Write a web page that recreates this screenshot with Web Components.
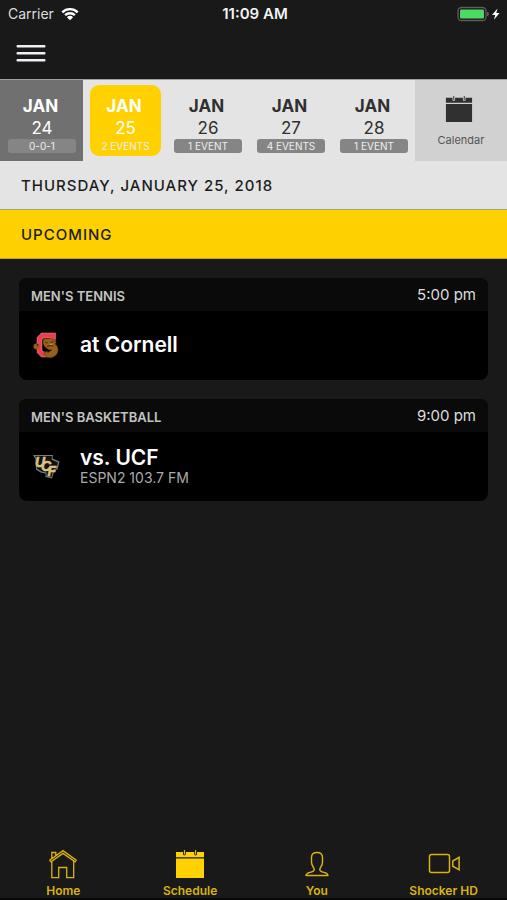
<!DOCTYPE html>
<html lang="en">
<head>
<meta charset="utf-8">
<meta name="viewport" content="width=device-width, initial-scale=1">
<title>Schedule</title>
<style>
  html, body { margin: 0; }
  body { background: #191919; font-family: Inter, "Liberation Sans", sans-serif; }
</style>
</head>
<body>
<schedule-app></schedule-app>
<script>
const icons = {
  wifi: `<svg width="18" height="14" viewBox="0 0 18 14" fill="none" stroke="#fff" stroke-width="2.4"><path d="M1.3 5.3a11 11 0 0 1 15.4 0M4.1 8.2a7 7 0 0 1 9.8 0"/><path d="M9 13.2 5.9 10.2a4.5 4.5 0 0 1 6.2 0Z" fill="#fff" stroke="none"/></svg>`,
  battery: `<svg width="45" height="16" viewBox="0 0 45 16"><rect x="1" y="1.5" width="28" height="13" rx="3.5" fill="none" stroke="#5c5c5c" stroke-width="1.3"/><rect x="3" y="3.5" width="24" height="9" rx="1.2" fill="#4cd964"/><path d="M30.5 6q2 2 0 4Z" fill="#5c5c5c" stroke="#5c5c5c"/><path d="M40.5 2.5 35 9h3.2l-1.2 4.7L42.5 7h-3.2Z" fill="#fff"/></svg>`,
  menu: `<svg width="30" height="20" viewBox="0 0 30 20" fill="#eeeef4"><rect x="0.5" y="1" width="29" height="2.6" rx="1"/><rect x="0.5" y="8" width="29" height="2.6" rx="1"/><rect x="0.5" y="15" width="29" height="2.6" rx="1"/></svg>`,
  calendar: `<svg width="30" height="30" viewBox="0 0 30 30" fill="currentColor"><path d="M1 3h7v2a1.400 1.400 0 0 0 2.800 0V3h8.400v2a1.400 1.400 0 0 0 2.800 0V3h7v5.300H1ZM1 9.600h28V29H1Z"/><path d="M8.900 1h1v4.500h-1ZM20.100 1h1v4.500h-1Z"/></svg>`,
  home: `<svg width="30" height="30" viewBox="0 0 30 30" fill="none" stroke="currentColor" stroke-width="1.3"><path d="M3 12.800 1.800 11.100 15 1.600l13.200 9.500-1.100 1.700L15 4.400ZM3.800 9.200V3.500h4v3M3.800 12.600V28.600h6.900V18.500h8v10.100h7V12.200"/></svg>`,
  you: `<svg width="30" height="30" viewBox="0 0 30 30" fill="none" stroke="currentColor" stroke-width="1.4" stroke-linejoin="round"><path d="M4 26.500c.2-2 1.800-2.600 4-3.100 3-.7 4.200-1.400 4.200-3 0-1.700-2.700-3.700-2.700-7.500V8.500c0-3.200 2.100-5 5.500-5s5.500 1.800 5.500 5v4.400c0 3.800-2.700 5.800-2.700 7.500 0 1.600 1.200 2.300 4.200 3 2.200.5 3.800 1.100 4 3.100Z"/></svg>`,
  video: `<svg width="34" height="30" viewBox="0 0 34 30" fill="none" stroke="currentColor" stroke-width="1.5"><rect x="2.500" y="5.500" width="20" height="18" rx="2"/><path d="M25.800 12v5.200l6.300 3.600V8.400Z"/></svg>`,
  cornell: `<svg width="28" height="28" viewBox="0 0 28 28" role="img" aria-label="Cornell"><path d="M21 9V4.500H10.500L7.500 7.500v13l3 3H16" fill="none" stroke="#f08a8e" stroke-width="5.400"/><path d="M21 9V4.500H10.500L7.500 7.500v13l3 3H16" fill="none" stroke="#e8404f" stroke-width="4.400"/><circle cx="4.500" cy="15.500" r="3" fill="#9a5a18"/><circle cx="5.500" cy="14" r="1" fill="#4d2b0b"/><path d="M11 9.500q1.500-3 4-1.500 4-1.500 6.500 1l2-.5.5 3-1 1.500q3.500 2.500 3 6.500-.7 5.500-6.500 7-4.500 1-7-2.500l-.5-3 4 .5 4-2.500-3.500-.5-3.500-2.500q-2.500-2.500-2-6Z" fill="#99601c" stroke="#5d370e" stroke-width=".6"/><path d="m13 11 2.500 1M18.500 11.500l3-1M15 15.500l3-1 3 .5" fill="none" stroke="#3b230b" stroke-width="1"/><path d="m17.500 13.500 3-.5" stroke="#a8a8a0" stroke-width="1.200"/></svg>`,
  ucf: `<svg width="28" height="28" viewBox="0 0 28 28" role="img" aria-label="UCF"><path d="M1 3h20l-.5 3.500 7 3-2 8-3 .5L20 26.500l-6.500-1.500v-3.500l-5-1L4 17.500 3.500 7Z" fill="#777b80"/><path d="M3 4h17l-.5 3.500 6.500 3-1.500 6-3 .5L19.500 25l-5-1v-3.500l-5-1L5 16.500 4.500 6.500Z" fill="#111"/><g fill="#d8bd79" stroke="#e2cc93" stroke-width=".5" font-family="Liberation Sans, sans-serif" font-size="14" font-weight="700" font-style="italic"><text x="3 9 15.500" y="15 19 23.500">UCF</text></g></svg>`
};

function define(name, html, setup) {
  const template = document.createElement('template');
  template.innerHTML = `<style>*,*::before{box-sizing:border-box} svg{display:block;flex:none}</style>` + html;
  customElements.define(name, class extends HTMLElement {
    connectedCallback() {
      if (this.shadowRoot) return;
      const root = this.attachShadow({ mode: 'open' });
      root.append(template.content.cloneNode(true));
      if (setup) setup(this, root);
    }
  });
}

define('status-bar', `<style>
  :host{display:grid;grid-template-columns:1fr auto 1fr;align-items:center;height:28px;padding:0 5px 0 8px;color:#fff;font-size:14px;line-height:20px}
  .carrier{display:flex;align-items:center;gap:7px;color:#ddd}
  .time{font-size:15px;font-weight:600;color:#f2f2f2}
  .power{display:flex;justify-content:flex-end}
</style>
<div class="carrier"><span>Carrier</span>${icons.wifi}</div><div class="time">11:09 AM</div><div class="power">${icons.battery}</div>`);

define('nav-bar', `<style>
  :host{display:flex;align-items:center;height:51px;padding:0 16px}
  button{border:0;padding:0;background:none}
</style><button aria-label="Menu">${icons.menu}</button>`);

define('day-tile', `<style>
  :host{display:block;color:#303030}
  button{display:flex;flex-direction:column;width:100%;height:100%;border:0;margin:0;padding:15px 7px 0 8px;background:none;font:inherit;color:inherit;text-align:center}
  .month{padding-right:3px;font-size:17px;line-height:22px;font-weight:700}
  .day{padding-top:1px;font-size:17px;line-height:20px}
  .note{height:14px;margin-top:1px;border-radius:3px;background:#858585;color:#eee;font-size:10px;line-height:14px;white-space:nowrap}
  :host([past]){background:#707070;color:#fff}
  :host([selected]){padding:5px 5px 5px 7px;color:#fff}
  :host([selected]) button{padding:10px 0 0;border-radius:9px;background:#ffd100}
  :host([selected]) .note{background:none}
</style><button><span class="month"></span><span class="day"></span><span class="note"><slot></slot></span></button>`,
(host, root) => {
  root.querySelector('.month').textContent = host.getAttribute('month');
  root.querySelector('.day').textContent = host.getAttribute('day');
});

define('calendar-button', `<style>
  :host{display:block;background:#d1d1d1;color:#303030}
  button{display:flex;flex-direction:column;align-items:center;width:100%;height:100%;border:0;padding:15px 0 0;background:none;font:inherit;color:inherit;font-size:11px;line-height:16px}
  svg{width:28px;height:28px;margin:0 5px 9px 0}
  span{color:#555}
</style><button>${icons.calendar}<span><slot></slot></span></button>`);

define('date-strip', `<style>
  :host{display:grid;box-sizing:border-box;grid-template-columns:repeat(5,minmax(0,83fr)) minmax(0,92fr);height:82px;background:#e4e4e4;border-top:1px solid #a0a0a0}
  ::slotted(*){box-sizing:border-box}
</style><slot></slot>`);

define('section-bar', `<style>
  :host{display:block;padding:1px 21px 0;background:#e4e4e4;color:#1c1c1c;font-size:15px;font-weight:500;line-height:47px;letter-spacing:1px;border-bottom:1px solid #aaa285}
  :host([accent]){background:#ffd100;border-bottom-color:#c5a511}
  h2{margin:0;font:inherit}
</style><h2><slot></slot></h2>`);

define('event-card', `<style>
  :host{display:block;overflow:hidden;border-radius:8px;background:#000;color:#fff}
  header{display:flex;justify-content:space-between;align-items:center;height:33px;padding:0 12px;background:#0a0a0a}
  h3{margin:0;padding-top:2px;font-size:13px;line-height:16px;font-weight:600;color:#c4c4c4}
  time{font-size:15px;line-height:20px;color:#dedede}
  .body{display:flex;align-items:center;gap:20px;height:69px;padding:0 13px 2px}
  .logo{width:28px}
  strong{display:block;font-size:21px;line-height:24px;font-weight:600}
</style><header><h3></h3><time></time></header><div class="body"><div class="logo"></div><div><strong></strong><slot name="info"></slot></div></div>`,
(host, root) => {
  root.querySelector('h3').textContent = host.getAttribute('sport');
  root.querySelector('time').textContent = host.getAttribute('time');
  root.querySelector('strong').textContent = host.getAttribute('opponent');
  root.querySelector('.logo').innerHTML = icons[host.getAttribute('logo')];
});

define('tab-item', `<style>
  :host{display:block;min-width:0}
  a{display:flex;flex-direction:column;align-items:center;gap:5px;color:#d9b410;text-decoration:none;font-size:12px;line-height:14px;font-weight:600;white-space:nowrap}
  :host([active]) svg{color:#ffd100}
</style><a href="#"><span class="icon"></span><span><slot></slot></span></a>`,
(host, root) => { root.querySelector('.icon').innerHTML = icons[host.getAttribute('icon')]; });

define('tab-bar', `<style>
  :host{display:grid;grid-template-columns:repeat(4,minmax(0,1fr))}
</style><slot></slot>`);

define('schedule-app', `<style>
  :host{display:flex;flex-direction:column;min-height:100vh;background:#191919}
  main{flex:1}
  .events{display:grid;gap:19px;padding:20px 19px 19px}
  .info{font-size:14px;line-height:16px;color:#aaa}
  footer{border-bottom:2px solid #080808}
  .events{padding-top:19px}
</style>
<status-bar></status-bar>
<nav-bar></nav-bar>
<main>
  <date-strip>
    <day-tile past month="JAN" day="24">0-0-1</day-tile>
    <day-tile selected month="JAN" day="25">2 EVENTS</day-tile>
    <day-tile month="JAN" day="26">1 EVENT</day-tile>
    <day-tile month="JAN" day="27">4 EVENTS</day-tile>
    <day-tile month="JAN" day="28">1 EVENT</day-tile>
    <calendar-button>Calendar</calendar-button>
  </date-strip>
  <section-bar>THURSDAY, JANUARY 25, 2018</section-bar>
  <section-bar accent>UPCOMING</section-bar>
  <div class="events">
    <event-card sport="MEN'S TENNIS" time="5:00 pm" opponent="at Cornell" logo="cornell"></event-card>
    <event-card sport="MEN'S BASKETBALL" time="9:00 pm" opponent="vs. UCF" logo="ucf"><div class="info" slot="info">ESPN2 103.7 FM</div></event-card>
  </div>
</main>
<footer>
  <tab-bar>
    <tab-item icon="home">Home</tab-item>
    <tab-item icon="calendar" active>Schedule</tab-item>
    <tab-item icon="you">You</tab-item>
    <tab-item icon="video">Shocker HD</tab-item>
  </tab-bar>
</footer>`);
</script>
</body>
</html>
